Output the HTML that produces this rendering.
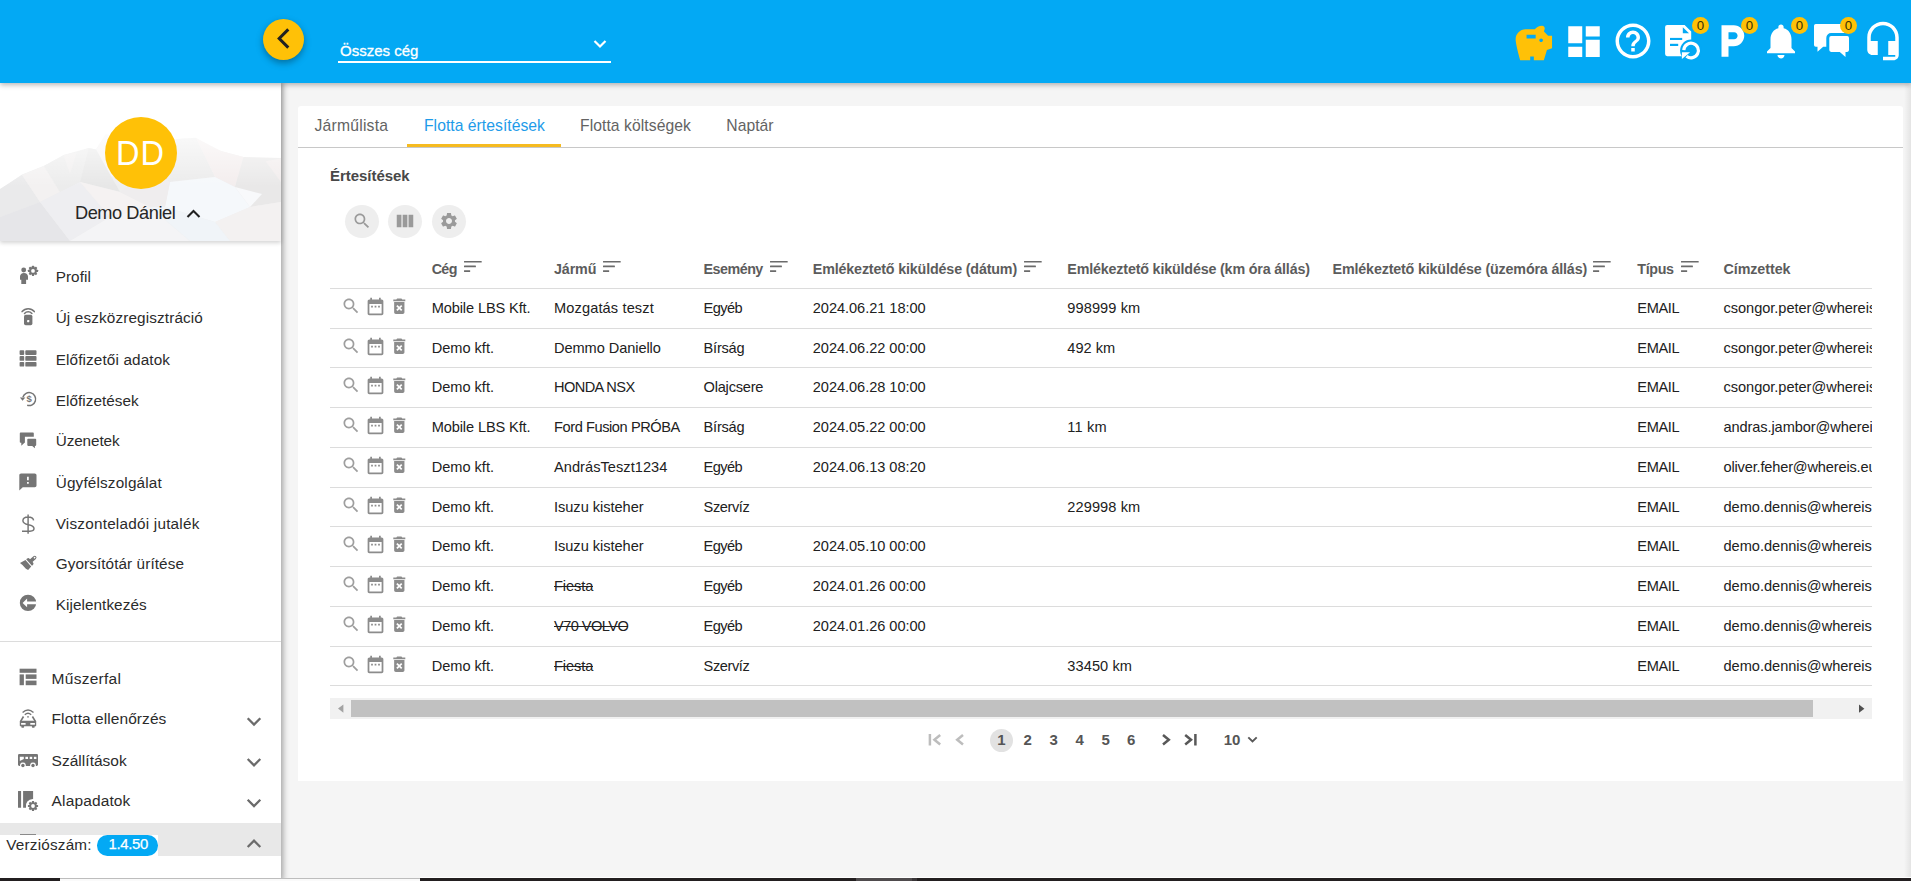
<!DOCTYPE html>
<html lang="hu"><head><meta charset="utf-8"><title>Flotta értesítések</title>
<style>
*{box-sizing:border-box;margin:0;padding:0}
html,body{width:1911px;height:881px;overflow:hidden}
body{font-family:"Liberation Sans",sans-serif;background:#f5f5f5;color:#212121;position:relative}
.abs,.ic,.t{position:absolute}
.t{white-space:nowrap;line-height:1}
.ic{display:block;overflow:visible}
#top{left:0;top:0;width:1911px;height:83px;background:#03a9f4;box-shadow:0 2px 5px rgba(0,0,0,.28);z-index:5}
#side{left:0;top:82px;width:281px;height:799px;background:#fff;box-shadow:2px 0 6px rgba(0,0,0,.35);z-index:4}
#card{left:298px;top:106px;width:1605px;height:675px;background:#fff;border-radius:3px 3px 0 0}
.h{font-weight:bold;color:#5c5c5c}
.c{color:#212121}
.m{font-size:15px;color:#2b2b2b}
.rl{position:absolute;left:330px;width:1542px;height:1px;background:#dcdcdc}
.bdg{position:absolute;width:17px;height:17px;border-radius:50%;background:#ffc107;color:#3b3106;font-size:13.3px;line-height:17px;text-align:center;top:16.5px}
.rb{position:absolute;width:34px;height:33.4px;border-radius:50%;background:#eeeeee;top:204.6px}
.pg{font-weight:bold;color:#555}
</style></head><body>

<div id="top" class="abs">
<div class="abs" style="left:263px;top:19px;width:41.200px;height:41.200px;border-radius:50%;background:#ffc107;box-shadow:0 3px 7px rgba(0,0,0,.34)"></div>
<svg class="ic" style="left:263px;top:19px;width:41px;height:41px" viewBox="0 0 41 41"><path d="M25.300 10.400 L16.200 19.500 L25.300 28.600" fill="none" stroke="#212121" stroke-width="3" stroke-linejoin="miter"/></svg>
<span class="t" style="left:340px;top:43px;font-size:15px;color:#fff;-webkit-text-stroke:.3px #fff">Összes cég</span>
<div class="abs" style="left:338px;top:61px;width:273px;height:2px;background:#fff"></div>
<svg class="ic" style="left:592.5px;top:39px;width:14px;height:10px" viewBox="0 0 14 10"><path d="M1.5 2 L7 7.5 L12.5 2" fill="none" stroke="#fff" stroke-width="2.2"/></svg>
<svg class="ic" style="left:1511.8px;top:22px;width:43.7px;height:43.7px" viewBox="0 0 24 24" fill="#ffc107"><path d="M19.83 7.5l-2.27-2.27c.07-.42.18-.81.32-1.15.08-.18.12-.37.12-.58 0-.83-.67-1.5-1.5-1.5-1.64 0-3.09.79-4 2h-5C4.46 4 2 6.46 2 9.5S4.5 21 4.5 21H10v-2h2v2h5.5l1.68-5.59 2.82-.94V7.5h-2.17zM13 9H8V7h5v2zm3 2c-.55 0-1-.45-1-1s.45-1 1-1 1 .45 1 1-.45 1-1 1z"/></svg>
<svg class="ic" style="left:1562.700px;top:21px;width:42px;height:41.100px" viewBox="0 0 24 24" preserveAspectRatio="none" fill="#fff"><path d="M3 13h8V3H3v10zm0 8h8v-6H3v6zm10 0h8V11h-8v10zm0-18v6h8V3h-8z"/></svg>
<svg class="ic" style="left:1612.2px;top:20.3px;width:42px;height:42px" viewBox="0 0 24 24" fill="#fff"><path d="M11 18h2v-2h-2v2zm1-16C6.48 2 2 6.48 2 12s4.48 10 10 10 10-4.48 10-10S17.52 2 12 2zm0 18c-4.41 0-8-3.59-8-8s3.59-8 8-8 8 3.59 8 8-3.59 8-8 8zm0-14c-2.21 0-4 1.79-4 4h2c0-1.1.9-2 2-2s2 .9 2 2c0 2-3 1.75-3 5h2c0-2.25 3-2.5 3-5 0-2.21-1.79-4-4-4z"/></svg>
<svg class="ic" style="left:1655px;top:10px;width:60px;height:60px" viewBox="1655 10 60 60"><path d="M1667.2 25h17.4l6.6 6.5v22.6a2.1 2.1 0 0 1-2.1 2.1h-21.9a2.1 2.1 0 0 1-2.1-2.1v-27a2.1 2.1 0 0 1 2.1-2.1z" fill="#fff"/><path d="M1682.8 27.3v5.9h6.200z" fill="#03a9f4"/><rect x="1670" y="37.900" width="12.200" height="2.100" fill="#03a9f4"/><rect x="1670" y="43.800" width="8.200" height="2.200" fill="#03a9f4"/><circle cx="1691" cy="50.400" r="10.900" fill="#03a9f4"/><path d="M1683.800 50.100A7.300 7.300 0 1 1 1686.500 56.200" fill="none" stroke="#fff" stroke-width="3.200"/><path d="M1681.900 52.200h8.200l-8.200 6.700z" fill="#fff"/></svg>
<svg class="ic" style="left:1711.3px;top:20.3px;width:42px;height:42px" viewBox="0 0 24 24" fill="#fff"><path d="M13 3H6v18h4v-6h3c3.31 0 6-2.69 6-6s-2.69-6-6-6zm.2 8H10V7h3.2c1.1 0 2 .9 2 2s-.9 2-2 2z"/></svg>
<svg class="ic" style="left:1760.3px;top:20.3px;width:42px;height:42px" viewBox="0 0 24 24" fill="#fff"><path d="M12 22c1.1 0 2-.9 2-2h-4c0 1.1.89 2 2 2zm6-6v-5c0-3.07-1.64-5.64-4.5-6.32V4c0-.83-.67-1.5-1.5-1.5s-1.5.67-1.5 1.5v.68C7.63 5.36 6 7.92 6 11v5l-2 2v1h16v-1l-2-2z"/></svg>
<svg class="ic" style="left:1800px;top:10px;width:60px;height:60px" viewBox="1800 10 60 60"><path d="M1815.800 24h27a1.800 1.800 0 0 1 1.800 1.800v19.200a1.800 1.800 0 0 1-1.800 1.800h-19.600l-5.700 5v-5h-1.700a1.800 1.800 0 0 1-1.800-1.800v-19.200a1.800 1.800 0 0 1 1.800-1.800z" fill="#fff"/><path d="M1831.100 36.100h16.100a1.800 1.800 0 0 1 1.800 1.800v12.200a1.800 1.800 0 0 1-1.800 1.800h-1.700v5.200l-5.700-5.200h-8.700a1.800 1.800 0 0 1-1.800-1.800v-12.200a1.800 1.800 0 0 1 1.800-1.800z" fill="#fff" stroke="#03a9f4" stroke-width="6" paint-order="stroke" stroke-linejoin="round"/></svg>
<svg class="ic" style="left:1862.3px;top:20.3px;width:42px;height:42px" viewBox="0 0 24 24" fill="#fff"><path d="M12 1c-4.97 0-9 4.03-9 9v7c0 1.66 1.34 3 3 3h3v-8H5v-2c0-3.87 3.13-7 7-7s7 3.13 7 7v2h-4v8h4v1h-7v2h6c1.66 0 3-1.34 3-3V10c0-4.97-4.03-9-9-9z"/></svg>
<div class="bdg" style="left:1692.0px">0</div>
<div class="bdg" style="left:1741.0px">0</div>
<div class="bdg" style="left:1791.0px">0</div>
<div class="bdg" style="left:1840.0px">0</div>
</div>
<div id="side" class="abs">
<div class="abs" style="left:0;top:0;width:281px;height:159px;overflow:hidden;box-shadow:0 2px 4px rgba(0,0,0,.17);background:#fff">
<svg class="ic" style="left:0;top:0;width:281px;height:159px" viewBox="0 0 281 159">
<polygon fill="#efefef" points="0,107.4 22,92.6 44,83.7 63.5,73.4 76.7,70.5 88.5,66 96,67.5 106,52 122,58 160,64 177,57 196,55.7 206.6,63 221,69 243.5,75 265.6,79.3 281,76.4 281,159 0,159"/>
<polygon fill="#f6f4f4" points="96,67.5 106,52 122,58 130,90 110,95"/>
<polygon fill="#eaeaeb" points="0,107 22,93 40,120 0,135"/>
<polygon fill="#f3f1f1" points="22,93 44,84 60,110 40,120"/>
<polygon fill="#ececec" points="44,84 63.5,73 88.5,66 80,100 60,110"/>
<polygon fill="#e7e7e7" points="88.5,66 96,67.5 120,110 80,100"/>
<polygon fill="#f1efef" points="63.5,73 76.7,70.5 70,92"/>
<polygon fill="#e6e6e9" points="0,135 40,120 70,159 0,159"/>
<polygon fill="#eeeef1" points="40,120 60,110 80,100 110,135 70,159"/>
<polygon fill="#f5f2f2" points="80,100 120,110 150,125 110,135"/>
<polygon fill="#f4f4f6" points="110,135 150,125 190,159 70,159"/>
<polygon fill="#ebebeb" points="160,64 177,57 196,56 215,95 170,100 150,90"/>
<polygon fill="#f3eded" points="196,56 221,69 243.5,75 235,105 215,95"/>
<polygon fill="#e9e8e8" points="243.5,75 281,76 281,120 250,125 235,105"/>
<polygon fill="#f1ecec" points="265.6,79.3 281,76.4 281,100"/>
<polygon fill="#f5f8fb" points="170,100 215,95 235,105 250,125 215,140 165,125"/>
<polygon fill="#efedee" points="120,110 150,90 170,100 165,125 150,125"/>
<polygon fill="#f3f1f1" points="215,140 250,125 281,120 281,159 230,159"/>
<polygon fill="#f0f4f8" points="150,125 165,125 215,140 230,159 190,159"/>
<polygon fill="#f8f9fb" points="235,105 250,125 262,112"/>
<defs><linearGradient id="mg" x1="0" y1="0" x2="0" y2="1"><stop offset="0" stop-color="#fff" stop-opacity=".9"/><stop offset="1" stop-color="#fff" stop-opacity="0"/></linearGradient></defs><rect x="0" y="40" width="281" height="65" fill="url(#mg)"/>
</svg>
</div>
<div class="abs" style="left:105px;top:35px;width:72px;height:72px;border-radius:50%;background:#ffc107"></div>
<span class="t" id="dd" style="left:115.9px;top:52.7px;font-size:35px;color:#fff;letter-spacing:1px;transform:scaleX(.93);transform-origin:0 0">DD</span>
<span class="t" id="nm" style="left:75px;top:121.59px;font-size:18.2px;letter-spacing:-0.440px;color:#262626">Demo Dániel</span>
<svg class="ic" style="left:186px;top:127px;width:15px;height:10px" viewBox="0 0 15 10"><path d="M1.5 8 L7.5 2 L13.5 8" fill="none" stroke="#212121" stroke-width="2.1"/></svg>
<svg class="ic" style="left:0;top:0;width:281px;height:799px" viewBox="0 82 281 799" fill="#757575">
<circle cx="23.7" cy="270" r="2.45"/>
<path d="M20 276.600c0-2.300 1.500-3.700 4-3.700s4 1.400 4 3.700v3.100h-1.900v4.300h-4.800v-4.300H20z"/>
<circle cx="33" cy="270.9" r="3.8"/><rect x="31.9" y="265.79999999999995" width="2.2" height="2.3" rx=".4" transform="rotate(0 33 270.9)"/><rect x="31.9" y="265.79999999999995" width="2.2" height="2.3" rx=".4" transform="rotate(45 33 270.9)"/><rect x="31.9" y="265.79999999999995" width="2.2" height="2.3" rx=".4" transform="rotate(90 33 270.9)"/><rect x="31.9" y="265.79999999999995" width="2.2" height="2.3" rx=".4" transform="rotate(135 33 270.9)"/><rect x="31.9" y="265.79999999999995" width="2.2" height="2.3" rx=".4" transform="rotate(180 33 270.9)"/><rect x="31.9" y="265.79999999999995" width="2.2" height="2.3" rx=".4" transform="rotate(225 33 270.9)"/><rect x="31.9" y="265.79999999999995" width="2.2" height="2.3" rx=".4" transform="rotate(270 33 270.9)"/><rect x="31.9" y="265.79999999999995" width="2.2" height="2.3" rx=".4" transform="rotate(315 33 270.9)"/><circle cx="33" cy="270.9" r="1.9" fill="#fff"/>
<path d="M22.1 311.6A8 8 0 0 1 34.3 311.6M24.5 313.5A5 5 0 0 1 31.9 313.5" fill="none" stroke="#757575" stroke-width="1.5" stroke-linecap="round"/>
<rect x="24" y="314.7" width="8.4" height="10.6" rx="1.7"/><rect x="27.1" y="320" width="2.2" height="2.2" rx=".4" fill="#fff"/>
<rect x="19.6" y="350.2" width="4.6" height="4.7" rx=".9"/><rect x="25.3" y="350.2" width="11.2" height="4.7" rx=".9"/>
<rect x="19.6" y="356.1" width="4.6" height="4.7" rx=".9"/><rect x="25.3" y="356.1" width="11.2" height="4.7" rx=".9"/>
<rect x="19.6" y="361.9" width="4.6" height="4.7" rx=".9"/><rect x="25.3" y="361.9" width="11.2" height="4.7" rx=".9"/>
<path d="M22.9 397.2A6.5 6.5 0 1 1 27.2 405.3" fill="none" stroke="#757575" stroke-width="1.5"/>
<path d="M19.9 397.4h5.4l-2.7 3.4z"/>
<text x="29.2" y="402.3" font-size="9.5" font-weight="bold" text-anchor="middle" font-family="Liberation Sans, sans-serif">$</text>
<path d="M20.600 432.600h12.400a.8.8 0 0 1 .8.8v3.400h-8.900v6h-.4l-3.200 2.900v-2.900h-.7a.8.8 0 0 1-.8-.8v-8.600a.8.8 0 0 1 .8-.8z"/>
<path d="M28.100 438.800h7.300a.8.8 0 0 1 .8.8v5.500a.8.8 0 0 1-.8.8h-.5v2.300l-2.700-2.300h-4.100a.8.8 0 0 1-.8-.8v-5.500a.8.8 0 0 1 .8-.8z"/>
<path transform="translate(17.58 471.68) scale(0.86)" d="M20 2H4c-1.1 0-1.99.9-1.99 2L2 22l4-4h14c1.1 0 2-.9 2-2V4c0-1.1-.9-2-2-2zm-7 12h-2v-2h2v2zm0-4h-2V6h2v4z"/>
<path d="M28.1 514.5V533.8M33.6 520.4C33.2 518.2 31.2 517 28.2 517C25 517 22.9 518.6 22.9 520.8C22.9 526.2 34 523.4 34 528.6C34 530.3 32.6 531.2 30 531.2H22" fill="none" stroke="#757575" stroke-width="1.45"/>
<g transform="translate(28.700 562.900) rotate(48)"><path d="M-1.800 -3v-5a1.800 1.800 0 0 1 3.600 0v5z"/><ellipse cx="0" cy="-7.900" rx=".75" ry="1" fill="#fff"/><path d="M-4.300 -.5v-1.300q0-1.700 1.700-1.700h5.200q1.700 0 1.700 1.700v1.300z"/><path d="M-4.300 .5h8.600l.5 4.600q-2.500 1.300-4.300 1q-3.300-.5-6.300.400z"/></g>
<circle cx="28" cy="602.9" r="8.2"/><path d="M22.6 602.9l4.5-4.4v3.1h9.6v2.6h-9.6v3.1z" fill="#fff"/>
<rect x="0" y="641" width="281" height="1" fill="#dcdcdc"/>
<rect x="19.6" y="668.7" width="16.9" height="4.1"/><rect x="19.6" y="674.4" width="4.3" height="10.8"/><rect x="25.7" y="674.4" width="10.8" height="4.5"/><rect x="25.7" y="680.6" width="10.8" height="4.6"/>
<path d="M22.600 712.500Q28 707.500 33.500 712.500M24.800 714.700Q28 711.900 31.200 714.700" fill="none" stroke="#757575" stroke-width="1.400"/>
<rect x="27.300" y="716.100" width="1.400" height="1.500"/>
<path d="M23.500 716.500L20.600 721.400M32.400 716.500L35.400 721.400" fill="none" stroke="#757575" stroke-width="1.600"/>
<rect x="19.800" y="720.700" width="16.400" height="5.600" rx=".9"/><rect x="21.300" y="725.500" width="2.800" height="2.300" rx=".7"/><rect x="31.900" y="725.500" width="2.800" height="2.300" rx=".7"/>
<rect x="21.100" y="723" width="4.500" height="1.700" fill="#fff"/><rect x="30.300" y="723" width="4.600" height="1.700" fill="#fff"/>
<rect x="18" y="753.900" width="20" height="12" rx="1.300"/>
<path d="M19.800 756.800h4v2.200l-4 2z" fill="#fff"/><rect x="25.400" y="756.800" width="2.600" height="2.200" fill="#fff"/><rect x="29.700" y="756.800" width="2.500" height="2.200" fill="#fff"/><rect x="33.900" y="756.800" width="2.500" height="2.200" fill="#fff"/>
<circle cx="22.900" cy="765.500" r="2.900" fill="#fff"/><circle cx="33" cy="765.500" r="2.900" fill="#fff"/><circle cx="22.900" cy="765.500" r="1.700"/><circle cx="33" cy="765.500" r="1.700"/>
<rect x="18" y="790.900" width="3.100" height="16.900" rx=".3"/><path d="M23.100 790.900H33.100V798.900A7.100 7.100 0 0 0 26 807.800H23.100z"/>
<circle cx="33" cy="806" r="3.8"/><rect x="31.9" y="800.9" width="2.2" height="2.3" rx=".4" transform="rotate(0 33 806)"/><rect x="31.9" y="800.9" width="2.2" height="2.3" rx=".4" transform="rotate(45 33 806)"/><rect x="31.9" y="800.9" width="2.2" height="2.3" rx=".4" transform="rotate(90 33 806)"/><rect x="31.9" y="800.9" width="2.2" height="2.3" rx=".4" transform="rotate(135 33 806)"/><rect x="31.9" y="800.9" width="2.2" height="2.3" rx=".4" transform="rotate(180 33 806)"/><rect x="31.9" y="800.9" width="2.2" height="2.3" rx=".4" transform="rotate(225 33 806)"/><rect x="31.9" y="800.9" width="2.2" height="2.3" rx=".4" transform="rotate(270 33 806)"/><rect x="31.9" y="800.9" width="2.2" height="2.3" rx=".4" transform="rotate(315 33 806)"/><circle cx="33" cy="806" r="1.9" fill="#fff"/>
<path d="M247.700 718.3l6.300 6.300l6.300-6.300" fill="none" stroke="#6b6b6b" stroke-width="2.300"/>
<path d="M247.700 759l6.300 6.300l6.300-6.300" fill="none" stroke="#6b6b6b" stroke-width="2.300"/>
<path d="M247.700 799.8l6.300 6.300l6.300-6.300" fill="none" stroke="#6b6b6b" stroke-width="2.300"/>
</svg>
<span class="t" id="m0" style="left:55.7px;top:186.85px;font-size:15.3px;letter-spacing:0.057px;color:#2b2b2b">Profil</span>
<span class="t" id="m1" style="left:55.7px;top:227.85px;font-size:15.3px;letter-spacing:0.133px;color:#2b2b2b">Új eszközregisztráció</span>
<span class="t" id="m2" style="left:55.7px;top:269.65px;font-size:15.3px;letter-spacing:0.126px;color:#2b2b2b">Előfizetői adatok</span>
<span class="t" id="m3" style="left:55.7px;top:310.85px;font-size:15.3px;letter-spacing:0.051px;color:#2b2b2b">Előfizetések</span>
<span class="t" id="m4" style="left:55.7px;top:351.35px;font-size:15.3px;letter-spacing:-0.103px;color:#2b2b2b">Üzenetek</span>
<span class="t" id="m5" style="left:55.7px;top:392.55px;font-size:15.3px;letter-spacing:0.164px;color:#2b2b2b">Ügyfélszolgálat</span>
<span class="t" id="m6" style="left:55.7px;top:433.75px;font-size:15.3px;letter-spacing:0.224px;color:#2b2b2b">Viszonteladói jutalék</span>
<span class="t" id="m7" style="left:55.7px;top:474.05px;font-size:15.3px;letter-spacing:0.086px;color:#2b2b2b">Gyorsítótár ürítése</span>
<span class="t" id="m8" style="left:55.7px;top:514.75px;font-size:15.3px;letter-spacing:0.066px;color:#2b2b2b">Kijelentkezés</span>
<span class="t" id="n0" style="left:51.6px;top:588.98px;font-size:15.5px;letter-spacing:0.257px;color:#2b2b2b">Műszerfal</span>
<span class="t" id="n1" style="left:51.6px;top:629.48px;font-size:15.5px;letter-spacing:0.063px;color:#2b2b2b">Flotta ellenőrzés</span>
<span class="t" id="n2" style="left:51.6px;top:670.68px;font-size:15.5px;letter-spacing:0.022px;color:#2b2b2b">Szállítások</span>
<span class="t" id="n3" style="left:51.6px;top:711.48px;font-size:15.5px;letter-spacing:0.134px;color:#2b2b2b">Alapadatok</span>
<div class="abs" style="left:0;top:740.6px;width:281px;height:33px;background:#e8e8e8"></div>
<div class="abs" style="left:20px;top:751.5px;width:16px;height:1.4px;background:#8a8a8a"></div>
<svg class="ic" style="left:246px;top:755.800px;width:16px;height:11px" viewBox="0 0 16 11"><path d="M1.7 9l6.300-6.300l6.300 6.300" fill="none" stroke="#6b6b6b" stroke-width="2.300"/></svg>
<div class="abs" style="left:0;top:752.500px;width:158px;height:21.100px;background:#fff"></div>
<span class="t" id="ver" style="left:6.3px;top:755.05px;font-size:15.3px;letter-spacing:0.190px;color:#2b2b2b">Verziószám:</span>
<div class="abs" style="left:97px;top:753px;width:60.500px;height:20.600px;border-radius:10.300px;background:#03a9f4"></div>
<span class="t" id="vnum" style="left:108.5px;top:755.39px;font-size:14.9px;letter-spacing:-0.318px;color:#fff;-webkit-text-stroke:.25px #fff">1.4.50</span>
</div>
<div id="card" class="abs"></div>
<div class="abs" style="left:298px;top:147px;width:1605px;height:1px;background:#c8c8c8"></div>
<div class="abs" style="left:407px;top:144px;width:154px;height:3px;background:#f6bb20"></div>
<span class="t" id="tab1" style="left:314.5px;top:117.71px;font-size:15.7px;letter-spacing:0.222px;color:#636363">Járműlista</span>
<span class="t" id="tab2" style="left:424px;top:117.71px;font-size:15.7px;letter-spacing:0.037px;color:#1e9be9">Flotta értesítések</span>
<span class="t" id="tab3" style="left:580px;top:117.71px;font-size:15.7px;letter-spacing:0.070px;color:#636363">Flotta költségek</span>
<span class="t" id="tab4" style="left:726.3px;top:117.71px;font-size:15.7px;letter-spacing:0.034px;color:#636363">Naptár</span>
<span class="t" id="ttl" style="left:330px;top:168.30px;font-size:15px;letter-spacing:-0.042px;font-weight:bold;color:#484848">Értesítések</span>
<div class="rb" style="left:345px"></div>
<svg class="ic" style="left:352px;top:211.4px;width:20px;height:20px" viewBox="0 0 24 24" fill="#9a9a9a" ><path d="M15.5 14h-.79l-.28-.27C15.41 12.59 16 11.11 16 9.5 16 5.91 13.09 3 9.5 3S3 5.91 3 9.5 5.91 16 9.5 16c1.61 0 3.09-.59 4.23-1.57l.27.28v.79l5 4.99L20.49 19l-4.99-5zm-6 0C7.01 14 5 11.99 5 9.5S7.01 5 9.5 5 14 7.01 14 9.5 11.99 14 9.5 14z"/></svg>
<div class="rb" style="left:388.3px"></div>
<svg class="ic" style="left:395.3px;top:211.4px;width:20px;height:20px" viewBox="0 0 24 24" fill="#9a9a9a" ><path d="M2.1 4.6h5.6v15H2.1zM9.2 4.6h5.6v15H9.2zM16.3 4.6h5.600v15h-5.600z"/></svg>
<div class="rb" style="left:432px"></div>
<svg class="ic" style="left:439px;top:211.4px;width:20px;height:20px" viewBox="0 0 24 24" fill="#9a9a9a" ><path d="M19.14 12.94c.04-.3.06-.61.06-.94 0-.32-.02-.64-.07-.94l2.03-1.58c.18-.14.23-.41.12-.61l-1.92-3.32c-.12-.22-.37-.29-.59-.22l-2.39.96c-.5-.38-1.03-.7-1.62-.94l-.36-2.54c-.04-.24-.24-.41-.48-.41h-3.84c-.24 0-.43.17-.47.41l-.36 2.54c-.59.24-1.13.57-1.62.94l-2.39-.96c-.22-.08-.47 0-.59.22L2.74 8.87c-.12.21-.08.47.12.61l2.03 1.58c-.05.3-.09.63-.09.94s.02.64.07.94l-2.03 1.58c-.18.14-.23.41-.12.61l1.92 3.32c.12.22.37.29.59.22l2.39-.96c.5.38 1.03.7 1.62.94l.36 2.54c.05.24.24.41.48.41h3.84c.24 0 .44-.17.47-.41l.36-2.54c.59-.24 1.13-.56 1.62-.94l2.39.96c.22.08.47 0 .59-.22l1.92-3.32c.12-.22.07-.47-.12-.61l-2.01-1.58zM12 15.6c-1.98 0-3.6-1.62-3.6-3.6s1.62-3.6 3.6-3.6 3.6 1.62 3.6 3.6-1.62 3.6-3.6 3.6z"/></svg>
<span class="t h" id="h0" style="left:431.7px;top:261.50px;font-size:14.3px;letter-spacing:-0.639px;">Cég</span>
<svg class="ic" style="left:464.40000000000003px;top:261px;width:18px;height:12px" viewBox="0 0 18 12" fill="#6b6b6b"><rect x="0" y="0" width="17.700" height="1.600" rx=".3"/><rect x="0" y="4.600" width="11.900" height="1.600" rx=".3"/><rect x="0" y="9.300" width="6.200" height="1.600" rx=".3"/></svg>
<span class="t h" id="h1" style="left:554px;top:261.50px;font-size:14.3px;letter-spacing:-0.124px;">Jármű</span>
<svg class="ic" style="left:602.9px;top:261px;width:18px;height:12px" viewBox="0 0 18 12" fill="#6b6b6b"><rect x="0" y="0" width="17.700" height="1.600" rx=".3"/><rect x="0" y="4.600" width="11.900" height="1.600" rx=".3"/><rect x="0" y="9.300" width="6.200" height="1.600" rx=".3"/></svg>
<span class="t h" id="h2" style="left:703.6px;top:261.50px;font-size:14.3px;letter-spacing:-0.514px;">Esemény</span>
<svg class="ic" style="left:769.6px;top:261px;width:18px;height:12px" viewBox="0 0 18 12" fill="#6b6b6b"><rect x="0" y="0" width="17.700" height="1.600" rx=".3"/><rect x="0" y="4.600" width="11.900" height="1.600" rx=".3"/><rect x="0" y="9.300" width="6.200" height="1.600" rx=".3"/></svg>
<span class="t h" id="h3" style="left:812.8px;top:261.50px;font-size:14.3px;letter-spacing:-0.164px;">Emlékeztető kiküldése (dátum)</span>
<svg class="ic" style="left:1023.9px;top:261px;width:18px;height:12px" viewBox="0 0 18 12" fill="#6b6b6b"><rect x="0" y="0" width="17.700" height="1.600" rx=".3"/><rect x="0" y="4.600" width="11.900" height="1.600" rx=".3"/><rect x="0" y="9.300" width="6.200" height="1.600" rx=".3"/></svg>
<span class="t h" id="h4" style="left:1067.3px;top:261.50px;font-size:14.3px;letter-spacing:-0.173px;">Emlékeztető kiküldése (km óra állás)</span>
<span class="t h" id="h5" style="left:1332.6px;top:261.50px;font-size:14.3px;letter-spacing:-0.168px;">Emlékeztető kiküldése (üzemóra állás)</span>
<svg class="ic" style="left:1593.3999999999999px;top:261px;width:18px;height:12px" viewBox="0 0 18 12" fill="#6b6b6b"><rect x="0" y="0" width="17.700" height="1.600" rx=".3"/><rect x="0" y="4.600" width="11.900" height="1.600" rx=".3"/><rect x="0" y="9.300" width="6.200" height="1.600" rx=".3"/></svg>
<span class="t h" id="h6" style="left:1637.3px;top:261.50px;font-size:14.3px;letter-spacing:-0.365px;">Típus</span>
<svg class="ic" style="left:1680.5px;top:261px;width:18px;height:12px" viewBox="0 0 18 12" fill="#6b6b6b"><rect x="0" y="0" width="17.700" height="1.600" rx=".3"/><rect x="0" y="4.600" width="11.900" height="1.600" rx=".3"/><rect x="0" y="9.300" width="6.200" height="1.600" rx=".3"/></svg>
<span class="t h" id="h7" style="left:1723.5px;top:261.50px;font-size:14.3px;letter-spacing:-0.072px;">Címzettek</span>
<div class="rl" style="top:288px"></div>
<div class="rl" style="top:328px"></div>
<div class="rl" style="top:367px"></div>
<div class="rl" style="top:407px"></div>
<div class="rl" style="top:447px"></div>
<div class="rl" style="top:487px"></div>
<div class="rl" style="top:526px"></div>
<div class="rl" style="top:566px"></div>
<div class="rl" style="top:606px"></div>
<div class="rl" style="top:646px"></div>
<div class="rl" style="top:685px"></div>
<div class="abs" style="left:0;top:0;width:1872px;height:881px;overflow:hidden">
<svg class="ic" style="left:340.9px;top:296px;width:20.1px;height:20.1px" viewBox="0 0 24 24" fill="#9e9e9e" ><path d="M15.5 14h-.79l-.28-.27C15.41 12.59 16 11.11 16 9.5 16 5.91 13.09 3 9.5 3S3 5.91 3 9.5 5.91 16 9.5 16c1.61 0 3.09-.59 4.23-1.57l.27.28v.79l5 4.99L20.49 19l-4.99-5zm-6 0C7.01 14 5 11.99 5 9.5S7.01 5 9.5 5 14 7.01 14 9.5 11.99 14 9.5 14z"/></svg>
<svg class="ic" style="left:364.6px;top:295.7px;width:21px;height:21px" viewBox="0 0 24 24" fill="#8c8c8c" ><path d="M9 11H7v2h2v-2zm4 0h-2v2h2v-2zm4 0h-2v2h2v-2zm2-7h-1V2h-2v2H8V2H6v2H5c-1.11 0-1.99.9-1.99 2L3 20c0 1.1.89 2 2 2h14c1.1 0 2-.9 2-2V6c0-1.1-.9-2-2-2zm0 16H5V9h14v11z"/></svg>
<svg class="ic" style="left:388.7px;top:295.5px;width:20.6px;height:20.6px" viewBox="0 0 24 24" fill="#8c8c8c" ><path d="M6 19c0 1.1.9 2 2 2h8c1.1 0 2-.9 2-2V7H6v12zm2.46-7.12l1.41-1.41L12 12.59l2.12-2.12 1.41 1.41L13.41 14l2.12 2.12-1.41 1.41L12 15.41l-2.12 2.12-1.41-1.41L10.59 14l-2.13-2.12zM15.5 4l-1-1h-5l-1 1H5v2h14V4z"/></svg>
<span class="t c" id="r0c0" style="left:431.7px;top:300.64px;font-size:14.6px;letter-spacing:-0.120px;">Mobile LBS Kft.</span>
<span class="t c" id="r0c1" style="left:554px;top:300.64px;font-size:14.6px;letter-spacing:0.125px;">Mozgatás teszt</span>
<span class="t c" id="r0c2" style="left:703.6px;top:300.64px;font-size:14.6px;letter-spacing:-0.618px;">Egyéb</span>
<span class="t c" id="r0c3" style="left:812.8px;top:300.64px;font-size:14.6px;letter-spacing:-0.052px;">2024.06.21 18:00</span>
<span class="t c" id="r0c4" style="left:1067.3px;top:300.64px;font-size:14.6px;letter-spacing:0.087px;">998999 km</span>
<span class="t c" id="r0c6" style="left:1637.3px;top:300.64px;font-size:14.6px;letter-spacing:-0.379px;">EMAIL</span>
<span class="t c" id="r0c7" style="left:1723.5px;top:300.64px;font-size:14.6px;letter-spacing:-0.042px;">csongor.peter@whereis.eu</span>
<svg class="ic" style="left:340.9px;top:336px;width:20.1px;height:20.1px" viewBox="0 0 24 24" fill="#9e9e9e" ><path d="M15.5 14h-.79l-.28-.27C15.41 12.59 16 11.11 16 9.5 16 5.91 13.09 3 9.5 3S3 5.91 3 9.5 5.91 16 9.5 16c1.61 0 3.09-.59 4.23-1.57l.27.28v.79l5 4.99L20.49 19l-4.99-5zm-6 0C7.01 14 5 11.99 5 9.5S7.01 5 9.5 5 14 7.01 14 9.5 11.99 14 9.5 14z"/></svg>
<svg class="ic" style="left:364.6px;top:335.7px;width:21px;height:21px" viewBox="0 0 24 24" fill="#8c8c8c" ><path d="M9 11H7v2h2v-2zm4 0h-2v2h2v-2zm4 0h-2v2h2v-2zm2-7h-1V2h-2v2H8V2H6v2H5c-1.11 0-1.99.9-1.99 2L3 20c0 1.1.89 2 2 2h14c1.1 0 2-.9 2-2V6c0-1.1-.9-2-2-2zm0 16H5V9h14v11z"/></svg>
<svg class="ic" style="left:388.7px;top:335.5px;width:20.6px;height:20.6px" viewBox="0 0 24 24" fill="#8c8c8c" ><path d="M6 19c0 1.1.9 2 2 2h8c1.1 0 2-.9 2-2V7H6v12zm2.46-7.12l1.41-1.41L12 12.59l2.12-2.12 1.41 1.41L13.41 14l2.12 2.12-1.41 1.41L12 15.41l-2.12 2.12-1.41-1.41L10.59 14l-2.13-2.12zM15.5 4l-1-1h-5l-1 1H5v2h14V4z"/></svg>
<span class="t c" id="r1c0" style="left:431.7px;top:340.64px;font-size:14.6px;letter-spacing:-0.017px;">Demo kft.</span>
<span class="t c" id="r1c1" style="left:554px;top:340.64px;font-size:14.6px;letter-spacing:-0.077px;">Demmo Daniello</span>
<span class="t c" id="r1c2" style="left:703.6px;top:340.64px;font-size:14.6px;letter-spacing:-0.248px;">Bírság</span>
<span class="t c" id="r1c3" style="left:812.8px;top:340.64px;font-size:14.6px;letter-spacing:-0.052px;">2024.06.22 00:00</span>
<span class="t c" id="r1c4" style="left:1067.3px;top:340.64px;font-size:14.6px;letter-spacing:0.007px;">492 km</span>
<span class="t c" id="r1c6" style="left:1637.3px;top:340.64px;font-size:14.6px;letter-spacing:-0.379px;">EMAIL</span>
<span class="t c" id="r1c7" style="left:1723.5px;top:340.64px;font-size:14.6px;letter-spacing:-0.042px;">csongor.peter@whereis.eu</span>
<svg class="ic" style="left:340.9px;top:375px;width:20.1px;height:20.1px" viewBox="0 0 24 24" fill="#9e9e9e" ><path d="M15.5 14h-.79l-.28-.27C15.41 12.59 16 11.11 16 9.5 16 5.91 13.09 3 9.5 3S3 5.91 3 9.5 5.91 16 9.5 16c1.61 0 3.09-.59 4.23-1.57l.27.28v.79l5 4.99L20.49 19l-4.99-5zm-6 0C7.01 14 5 11.99 5 9.5S7.01 5 9.5 5 14 7.01 14 9.5 11.99 14 9.5 14z"/></svg>
<svg class="ic" style="left:364.6px;top:374.7px;width:21px;height:21px" viewBox="0 0 24 24" fill="#8c8c8c" ><path d="M9 11H7v2h2v-2zm4 0h-2v2h2v-2zm4 0h-2v2h2v-2zm2-7h-1V2h-2v2H8V2H6v2H5c-1.11 0-1.99.9-1.99 2L3 20c0 1.1.89 2 2 2h14c1.1 0 2-.9 2-2V6c0-1.1-.9-2-2-2zm0 16H5V9h14v11z"/></svg>
<svg class="ic" style="left:388.7px;top:374.5px;width:20.6px;height:20.6px" viewBox="0 0 24 24" fill="#8c8c8c" ><path d="M6 19c0 1.1.9 2 2 2h8c1.1 0 2-.9 2-2V7H6v12zm2.46-7.12l1.41-1.41L12 12.59l2.12-2.12 1.41 1.41L13.41 14l2.12 2.12-1.41 1.41L12 15.41l-2.12 2.12-1.41-1.41L10.59 14l-2.13-2.12zM15.5 4l-1-1h-5l-1 1H5v2h14V4z"/></svg>
<span class="t c" id="r2c0" style="left:431.7px;top:379.64px;font-size:14.6px;letter-spacing:-0.017px;">Demo kft.</span>
<span class="t c" id="r2c1" style="left:554px;top:379.64px;font-size:14.6px;letter-spacing:-0.597px;">HONDA NSX</span>
<span class="t c" id="r2c2" style="left:703.6px;top:379.64px;font-size:14.6px;letter-spacing:-0.227px;">Olajcsere</span>
<span class="t c" id="r2c3" style="left:812.8px;top:379.64px;font-size:14.6px;letter-spacing:-0.052px;">2024.06.28 10:00</span>
<span class="t c" id="r2c6" style="left:1637.3px;top:379.64px;font-size:14.6px;letter-spacing:-0.379px;">EMAIL</span>
<span class="t c" id="r2c7" style="left:1723.5px;top:379.64px;font-size:14.6px;letter-spacing:-0.042px;">csongor.peter@whereis.eu</span>
<svg class="ic" style="left:340.9px;top:415px;width:20.1px;height:20.1px" viewBox="0 0 24 24" fill="#9e9e9e" ><path d="M15.5 14h-.79l-.28-.27C15.41 12.59 16 11.11 16 9.5 16 5.91 13.09 3 9.5 3S3 5.91 3 9.5 5.91 16 9.5 16c1.61 0 3.09-.59 4.23-1.57l.27.28v.79l5 4.99L20.49 19l-4.99-5zm-6 0C7.01 14 5 11.99 5 9.5S7.01 5 9.5 5 14 7.01 14 9.5 11.99 14 9.5 14z"/></svg>
<svg class="ic" style="left:364.6px;top:414.7px;width:21px;height:21px" viewBox="0 0 24 24" fill="#8c8c8c" ><path d="M9 11H7v2h2v-2zm4 0h-2v2h2v-2zm4 0h-2v2h2v-2zm2-7h-1V2h-2v2H8V2H6v2H5c-1.11 0-1.99.9-1.99 2L3 20c0 1.1.89 2 2 2h14c1.1 0 2-.9 2-2V6c0-1.1-.9-2-2-2zm0 16H5V9h14v11z"/></svg>
<svg class="ic" style="left:388.7px;top:414.5px;width:20.6px;height:20.6px" viewBox="0 0 24 24" fill="#8c8c8c" ><path d="M6 19c0 1.1.9 2 2 2h8c1.1 0 2-.9 2-2V7H6v12zm2.46-7.12l1.41-1.41L12 12.59l2.12-2.12 1.41 1.41L13.41 14l2.12 2.12-1.41 1.41L12 15.41l-2.12 2.12-1.41-1.41L10.59 14l-2.13-2.12zM15.5 4l-1-1h-5l-1 1H5v2h14V4z"/></svg>
<span class="t c" id="r3c0" style="left:431.7px;top:419.64px;font-size:14.6px;letter-spacing:-0.120px;">Mobile LBS Kft.</span>
<span class="t c" id="r3c1" style="left:554px;top:419.64px;font-size:14.6px;letter-spacing:-0.419px;">Ford Fusion PRÓBA</span>
<span class="t c" id="r3c2" style="left:703.6px;top:419.64px;font-size:14.6px;letter-spacing:-0.248px;">Bírság</span>
<span class="t c" id="r3c3" style="left:812.8px;top:419.64px;font-size:14.6px;letter-spacing:-0.052px;">2024.05.22 00:00</span>
<span class="t c" id="r3c4" style="left:1067.3px;top:419.64px;font-size:14.6px;letter-spacing:0.206px;">11 km</span>
<span class="t c" id="r3c6" style="left:1637.3px;top:419.64px;font-size:14.6px;letter-spacing:-0.379px;">EMAIL</span>
<span class="t c" id="r3c7" style="left:1723.5px;top:419.64px;font-size:14.6px;letter-spacing:-0.1px;">andras.jambor@whereis.eu</span>
<svg class="ic" style="left:340.9px;top:455px;width:20.1px;height:20.1px" viewBox="0 0 24 24" fill="#9e9e9e" ><path d="M15.5 14h-.79l-.28-.27C15.41 12.59 16 11.11 16 9.5 16 5.91 13.09 3 9.5 3S3 5.91 3 9.5 5.91 16 9.5 16c1.61 0 3.09-.59 4.23-1.57l.27.28v.79l5 4.99L20.49 19l-4.99-5zm-6 0C7.01 14 5 11.99 5 9.5S7.01 5 9.5 5 14 7.01 14 9.5 11.99 14 9.5 14z"/></svg>
<svg class="ic" style="left:364.6px;top:454.7px;width:21px;height:21px" viewBox="0 0 24 24" fill="#8c8c8c" ><path d="M9 11H7v2h2v-2zm4 0h-2v2h2v-2zm4 0h-2v2h2v-2zm2-7h-1V2h-2v2H8V2H6v2H5c-1.11 0-1.99.9-1.99 2L3 20c0 1.1.89 2 2 2h14c1.1 0 2-.9 2-2V6c0-1.1-.9-2-2-2zm0 16H5V9h14v11z"/></svg>
<svg class="ic" style="left:388.7px;top:454.5px;width:20.6px;height:20.6px" viewBox="0 0 24 24" fill="#8c8c8c" ><path d="M6 19c0 1.1.9 2 2 2h8c1.1 0 2-.9 2-2V7H6v12zm2.46-7.12l1.41-1.41L12 12.59l2.12-2.12 1.41 1.41L13.41 14l2.12 2.12-1.41 1.41L12 15.41l-2.12 2.12-1.41-1.41L10.59 14l-2.13-2.12zM15.5 4l-1-1h-5l-1 1H5v2h14V4z"/></svg>
<span class="t c" id="r4c0" style="left:431.7px;top:459.64px;font-size:14.6px;letter-spacing:-0.017px;">Demo kft.</span>
<span class="t c" id="r4c1" style="left:554px;top:459.64px;font-size:14.6px;letter-spacing:0.041px;">AndrásTeszt1234</span>
<span class="t c" id="r4c2" style="left:703.6px;top:459.64px;font-size:14.6px;letter-spacing:-0.618px;">Egyéb</span>
<span class="t c" id="r4c3" style="left:812.8px;top:459.64px;font-size:14.6px;letter-spacing:-0.052px;">2024.06.13 08:20</span>
<span class="t c" id="r4c6" style="left:1637.3px;top:459.64px;font-size:14.6px;letter-spacing:-0.379px;">EMAIL</span>
<span class="t c" id="r4c7" style="left:1723.5px;top:459.64px;font-size:14.6px;letter-spacing:-0.17px;">oliver.feher@whereis.eu</span>
<svg class="ic" style="left:340.9px;top:495px;width:20.1px;height:20.1px" viewBox="0 0 24 24" fill="#9e9e9e" ><path d="M15.5 14h-.79l-.28-.27C15.41 12.59 16 11.11 16 9.5 16 5.91 13.09 3 9.5 3S3 5.91 3 9.5 5.91 16 9.5 16c1.61 0 3.09-.59 4.23-1.57l.27.28v.79l5 4.99L20.49 19l-4.99-5zm-6 0C7.01 14 5 11.99 5 9.5S7.01 5 9.5 5 14 7.01 14 9.5 11.99 14 9.5 14z"/></svg>
<svg class="ic" style="left:364.6px;top:494.7px;width:21px;height:21px" viewBox="0 0 24 24" fill="#8c8c8c" ><path d="M9 11H7v2h2v-2zm4 0h-2v2h2v-2zm4 0h-2v2h2v-2zm2-7h-1V2h-2v2H8V2H6v2H5c-1.11 0-1.99.9-1.99 2L3 20c0 1.1.89 2 2 2h14c1.1 0 2-.9 2-2V6c0-1.1-.9-2-2-2zm0 16H5V9h14v11z"/></svg>
<svg class="ic" style="left:388.7px;top:494.5px;width:20.6px;height:20.6px" viewBox="0 0 24 24" fill="#8c8c8c" ><path d="M6 19c0 1.1.9 2 2 2h8c1.1 0 2-.9 2-2V7H6v12zm2.46-7.12l1.41-1.41L12 12.59l2.12-2.12 1.41 1.41L13.41 14l2.12 2.12-1.41 1.41L12 15.41l-2.12 2.12-1.41-1.41L10.59 14l-2.13-2.12zM15.5 4l-1-1h-5l-1 1H5v2h14V4z"/></svg>
<span class="t c" id="r5c0" style="left:431.7px;top:499.64px;font-size:14.6px;letter-spacing:-0.017px;">Demo kft.</span>
<span class="t c" id="r5c1" style="left:554px;top:499.64px;font-size:14.6px;letter-spacing:-0.032px;">Isuzu kisteher</span>
<span class="t c" id="r5c2" style="left:703.6px;top:499.64px;font-size:14.6px;letter-spacing:-0.422px;">Szervíz</span>
<span class="t c" id="r5c4" style="left:1067.3px;top:499.64px;font-size:14.6px;letter-spacing:0.087px;">229998 km</span>
<span class="t c" id="r5c6" style="left:1637.3px;top:499.64px;font-size:14.6px;letter-spacing:-0.379px;">EMAIL</span>
<span class="t c" id="r5c7" style="left:1723.5px;top:499.64px;font-size:14.6px;letter-spacing:-0.02px;">demo.dennis@whereis.eu</span>
<svg class="ic" style="left:340.9px;top:534px;width:20.1px;height:20.1px" viewBox="0 0 24 24" fill="#9e9e9e" ><path d="M15.5 14h-.79l-.28-.27C15.41 12.59 16 11.11 16 9.5 16 5.91 13.09 3 9.5 3S3 5.91 3 9.5 5.91 16 9.5 16c1.61 0 3.09-.59 4.23-1.57l.27.28v.79l5 4.99L20.49 19l-4.99-5zm-6 0C7.01 14 5 11.99 5 9.5S7.01 5 9.5 5 14 7.01 14 9.5 11.99 14 9.5 14z"/></svg>
<svg class="ic" style="left:364.6px;top:533.7px;width:21px;height:21px" viewBox="0 0 24 24" fill="#8c8c8c" ><path d="M9 11H7v2h2v-2zm4 0h-2v2h2v-2zm4 0h-2v2h2v-2zm2-7h-1V2h-2v2H8V2H6v2H5c-1.11 0-1.99.9-1.99 2L3 20c0 1.1.89 2 2 2h14c1.1 0 2-.9 2-2V6c0-1.1-.9-2-2-2zm0 16H5V9h14v11z"/></svg>
<svg class="ic" style="left:388.7px;top:533.5px;width:20.6px;height:20.6px" viewBox="0 0 24 24" fill="#8c8c8c" ><path d="M6 19c0 1.1.9 2 2 2h8c1.1 0 2-.9 2-2V7H6v12zm2.46-7.12l1.41-1.41L12 12.59l2.12-2.12 1.41 1.41L13.41 14l2.12 2.12-1.41 1.41L12 15.41l-2.12 2.12-1.41-1.41L10.59 14l-2.13-2.12zM15.5 4l-1-1h-5l-1 1H5v2h14V4z"/></svg>
<span class="t c" id="r6c0" style="left:431.7px;top:538.64px;font-size:14.6px;letter-spacing:-0.017px;">Demo kft.</span>
<span class="t c" id="r6c1" style="left:554px;top:538.64px;font-size:14.6px;letter-spacing:-0.032px;">Isuzu kisteher</span>
<span class="t c" id="r6c2" style="left:703.6px;top:538.64px;font-size:14.6px;letter-spacing:-0.618px;">Egyéb</span>
<span class="t c" id="r6c3" style="left:812.8px;top:538.64px;font-size:14.6px;letter-spacing:-0.052px;">2024.05.10 00:00</span>
<span class="t c" id="r6c6" style="left:1637.3px;top:538.64px;font-size:14.6px;letter-spacing:-0.379px;">EMAIL</span>
<span class="t c" id="r6c7" style="left:1723.5px;top:538.64px;font-size:14.6px;letter-spacing:-0.02px;">demo.dennis@whereis.eu</span>
<svg class="ic" style="left:340.9px;top:574px;width:20.1px;height:20.1px" viewBox="0 0 24 24" fill="#9e9e9e" ><path d="M15.5 14h-.79l-.28-.27C15.41 12.59 16 11.11 16 9.5 16 5.91 13.09 3 9.5 3S3 5.91 3 9.5 5.91 16 9.5 16c1.61 0 3.09-.59 4.23-1.57l.27.28v.79l5 4.99L20.49 19l-4.99-5zm-6 0C7.01 14 5 11.99 5 9.5S7.01 5 9.5 5 14 7.01 14 9.5 11.99 14 9.5 14z"/></svg>
<svg class="ic" style="left:364.6px;top:573.7px;width:21px;height:21px" viewBox="0 0 24 24" fill="#8c8c8c" ><path d="M9 11H7v2h2v-2zm4 0h-2v2h2v-2zm4 0h-2v2h2v-2zm2-7h-1V2h-2v2H8V2H6v2H5c-1.11 0-1.99.9-1.99 2L3 20c0 1.1.89 2 2 2h14c1.1 0 2-.9 2-2V6c0-1.1-.9-2-2-2zm0 16H5V9h14v11z"/></svg>
<svg class="ic" style="left:388.7px;top:573.5px;width:20.6px;height:20.6px" viewBox="0 0 24 24" fill="#8c8c8c" ><path d="M6 19c0 1.1.9 2 2 2h8c1.1 0 2-.9 2-2V7H6v12zm2.46-7.12l1.41-1.41L12 12.59l2.12-2.12 1.41 1.41L13.41 14l2.12 2.12-1.41 1.41L12 15.41l-2.12 2.12-1.41-1.41L10.59 14l-2.13-2.12zM15.5 4l-1-1h-5l-1 1H5v2h14V4z"/></svg>
<span class="t c" id="r7c0" style="left:431.7px;top:578.64px;font-size:14.6px;letter-spacing:-0.017px;">Demo kft.</span>
<span class="t c" id="r7c1" style="left:554px;top:578.64px;font-size:14.6px;letter-spacing:-0.058px;">Fiesta</span>
<div class="abs" style="left:554px;top:586px;width:39.4px;height:1px;background:#212121"></div>
<span class="t c" id="r7c2" style="left:703.6px;top:578.64px;font-size:14.6px;letter-spacing:-0.618px;">Egyéb</span>
<span class="t c" id="r7c3" style="left:812.8px;top:578.64px;font-size:14.6px;letter-spacing:-0.052px;">2024.01.26 00:00</span>
<span class="t c" id="r7c6" style="left:1637.3px;top:578.64px;font-size:14.6px;letter-spacing:-0.379px;">EMAIL</span>
<span class="t c" id="r7c7" style="left:1723.5px;top:578.64px;font-size:14.6px;letter-spacing:-0.02px;">demo.dennis@whereis.eu</span>
<svg class="ic" style="left:340.9px;top:614px;width:20.1px;height:20.1px" viewBox="0 0 24 24" fill="#9e9e9e" ><path d="M15.5 14h-.79l-.28-.27C15.41 12.59 16 11.11 16 9.5 16 5.91 13.09 3 9.5 3S3 5.91 3 9.5 5.91 16 9.5 16c1.61 0 3.09-.59 4.23-1.57l.27.28v.79l5 4.99L20.49 19l-4.99-5zm-6 0C7.01 14 5 11.99 5 9.5S7.01 5 9.5 5 14 7.01 14 9.5 11.99 14 9.5 14z"/></svg>
<svg class="ic" style="left:364.6px;top:613.7px;width:21px;height:21px" viewBox="0 0 24 24" fill="#8c8c8c" ><path d="M9 11H7v2h2v-2zm4 0h-2v2h2v-2zm4 0h-2v2h2v-2zm2-7h-1V2h-2v2H8V2H6v2H5c-1.11 0-1.99.9-1.99 2L3 20c0 1.1.89 2 2 2h14c1.1 0 2-.9 2-2V6c0-1.1-.9-2-2-2zm0 16H5V9h14v11z"/></svg>
<svg class="ic" style="left:388.7px;top:613.5px;width:20.6px;height:20.6px" viewBox="0 0 24 24" fill="#8c8c8c" ><path d="M6 19c0 1.1.9 2 2 2h8c1.1 0 2-.9 2-2V7H6v12zm2.46-7.12l1.41-1.41L12 12.59l2.12-2.12 1.41 1.41L13.41 14l2.12 2.12-1.41 1.41L12 15.41l-2.12 2.12-1.41-1.41L10.59 14l-2.13-2.12zM15.5 4l-1-1h-5l-1 1H5v2h14V4z"/></svg>
<span class="t c" id="r8c0" style="left:431.7px;top:618.64px;font-size:14.6px;letter-spacing:-0.017px;">Demo kft.</span>
<span class="t c" id="r8c1" style="left:554px;top:618.64px;font-size:14.6px;letter-spacing:-0.548px;">V70 VOLVO</span>
<div class="abs" style="left:554px;top:626px;width:74.3px;height:1px;background:#212121"></div>
<span class="t c" id="r8c2" style="left:703.6px;top:618.64px;font-size:14.6px;letter-spacing:-0.618px;">Egyéb</span>
<span class="t c" id="r8c3" style="left:812.8px;top:618.64px;font-size:14.6px;letter-spacing:-0.052px;">2024.01.26 00:00</span>
<span class="t c" id="r8c6" style="left:1637.3px;top:618.64px;font-size:14.6px;letter-spacing:-0.379px;">EMAIL</span>
<span class="t c" id="r8c7" style="left:1723.5px;top:618.64px;font-size:14.6px;letter-spacing:-0.02px;">demo.dennis@whereis.eu</span>
<svg class="ic" style="left:340.9px;top:654px;width:20.1px;height:20.1px" viewBox="0 0 24 24" fill="#9e9e9e" ><path d="M15.5 14h-.79l-.28-.27C15.41 12.59 16 11.11 16 9.5 16 5.91 13.09 3 9.5 3S3 5.91 3 9.5 5.91 16 9.5 16c1.61 0 3.09-.59 4.23-1.57l.27.28v.79l5 4.99L20.49 19l-4.99-5zm-6 0C7.01 14 5 11.99 5 9.5S7.01 5 9.5 5 14 7.01 14 9.5 11.99 14 9.5 14z"/></svg>
<svg class="ic" style="left:364.6px;top:653.7px;width:21px;height:21px" viewBox="0 0 24 24" fill="#8c8c8c" ><path d="M9 11H7v2h2v-2zm4 0h-2v2h2v-2zm4 0h-2v2h2v-2zm2-7h-1V2h-2v2H8V2H6v2H5c-1.11 0-1.99.9-1.99 2L3 20c0 1.1.89 2 2 2h14c1.1 0 2-.9 2-2V6c0-1.1-.9-2-2-2zm0 16H5V9h14v11z"/></svg>
<svg class="ic" style="left:388.7px;top:653.5px;width:20.6px;height:20.6px" viewBox="0 0 24 24" fill="#8c8c8c" ><path d="M6 19c0 1.1.9 2 2 2h8c1.1 0 2-.9 2-2V7H6v12zm2.46-7.12l1.41-1.41L12 12.59l2.12-2.12 1.41 1.41L13.41 14l2.12 2.12-1.41 1.41L12 15.41l-2.12 2.12-1.41-1.41L10.59 14l-2.13-2.12zM15.5 4l-1-1h-5l-1 1H5v2h14V4z"/></svg>
<span class="t c" id="r9c0" style="left:431.7px;top:658.64px;font-size:14.6px;letter-spacing:-0.017px;">Demo kft.</span>
<span class="t c" id="r9c1" style="left:554px;top:658.64px;font-size:14.6px;letter-spacing:-0.058px;">Fiesta</span>
<div class="abs" style="left:554px;top:666px;width:39.4px;height:1px;background:#212121"></div>
<span class="t c" id="r9c2" style="left:703.6px;top:658.64px;font-size:14.6px;letter-spacing:-0.422px;">Szervíz</span>
<span class="t c" id="r9c4" style="left:1067.3px;top:658.64px;font-size:14.6px;letter-spacing:0.088px;">33450 km</span>
<span class="t c" id="r9c6" style="left:1637.3px;top:658.64px;font-size:14.6px;letter-spacing:-0.379px;">EMAIL</span>
<span class="t c" id="r9c7" style="left:1723.5px;top:658.64px;font-size:14.6px;letter-spacing:-0.02px;">demo.dennis@whereis.eu</span>
</div>
<div class="abs" style="left:330px;top:698px;width:1542px;height:21px;background:#f1f1f1"></div>
<div class="abs" style="left:351px;top:700px;width:1462px;height:17px;background:#c1c1c1"></div>
<svg class="ic" style="left:337.600px;top:703.900px;width:5.400px;height:9.200px" viewBox="0 0 6 9"><path d="M6 0 L0 4.5 L6 9z" fill="#a3a3a3"/></svg>
<svg class="ic" style="left:1858.900px;top:703.800px;width:5.400px;height:9.300px" viewBox="0 0 6 9"><path d="M0 0 L6 4.5 L0 9z" fill="#505050"/></svg>
<div class="abs" style="left:990px;top:729px;width:23px;height:23px;border-radius:50%;background:#e2e2e2"></div>
<span class="t pg" id="pg1" style="left:997.3px;top:732.30px;font-size:15px;">1</span>
<span class="t pg" id="pg2" style="left:1023.4px;top:732.30px;font-size:15px;">2</span>
<span class="t pg" id="pg3" style="left:1049.4px;top:732.30px;font-size:15px;">3</span>
<span class="t pg" id="pg4" style="left:1075.4px;top:732.30px;font-size:15px;">4</span>
<span class="t pg" id="pg5" style="left:1101.4px;top:732.30px;font-size:15px;">5</span>
<span class="t pg" id="pg6" style="left:1127.1px;top:732.30px;font-size:15px;">6</span>
<span class="t pg" id="pg10" style="left:1223.7px;top:732.30px;font-size:15px;">10</span>
<svg class="ic" style="left:915px;top:720px;width:360px;height:40px" viewBox="915 720 360 40" fill="none" stroke-width="2.5"><path d="M929.900 734.100v11.300M940.200 735l-5.800 4.750 5.800 4.750M963 735l-5.800 4.750 5.800 4.750" stroke="#bdbdbd"/><path d="M1163 735l5.800 4.750-5.800 4.750M1185.200 735l5.800 4.750-5.800 4.750M1195.400 734.100v11.300" stroke="#585858"/><path d="M1248.300 737.300l4.200 4.200 4.200-4.200" stroke="#585858" stroke-width="1.900"/></svg>
<div class="abs" style="left:1904px;top:83px;width:7px;height:795px;background:linear-gradient(to right,rgba(0,0,0,0),rgba(0,0,0,.07))"></div>
<div class="abs" style="left:0;top:878px;width:1911px;height:3px;background:#231f20;z-index:9"></div>
<div class="abs" style="left:60px;top:878px;width:360px;height:3px;background:#fafafa;z-index:9;border-top:1px solid #bdbdbd"></div>
<div class="abs" style="left:420px;top:877px;width:1491px;height:1px;background:#fff;z-index:9"></div>
<div class="abs" style="left:856px;top:878px;width:56px;height:3px;background:#4f4b4d;z-index:9"></div>
<div class="abs" style="left:912px;top:878px;width:5px;height:3px;background:#3a3638;z-index:9"></div>
</body></html>
